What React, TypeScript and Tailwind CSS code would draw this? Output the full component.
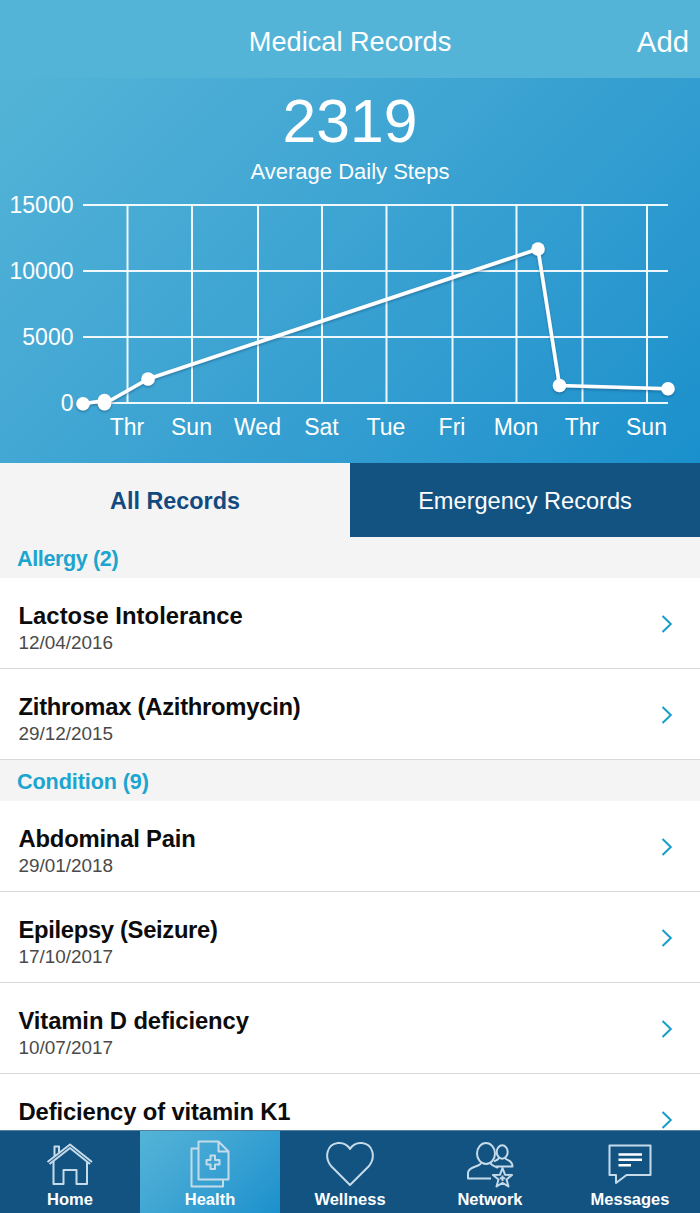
import type { ReactNode } from "react";

interface RecordItem {
  title: string;
  date?: string;
  tracking: string;
}

interface RecordGroup {
  name: string;
  count: number;
  tracking: string;
  items: RecordItem[];
}

const groups: RecordGroup[] = [
  {
    name: "Allergy",
    count: 2,
    tracking: "tracking-[-0.4px]",
    items: [
      { title: "Lactose Intolerance", date: "12/04/2016", tracking: "tracking-[0.04px]" },
      { title: "Zithromax (Azithromycin)", date: "29/12/2015", tracking: "tracking-[-0.26px]" },
    ],
  },
  {
    name: "Condition",
    count: 9,
    tracking: "tracking-[-0.1px]",
    items: [
      { title: "Abdominal Pain", date: "29/01/2018", tracking: "tracking-[-0.2px]" },
      { title: "Epilepsy (Seizure)", date: "17/10/2017", tracking: "tracking-[-0.33px]" },
      { title: "Vitamin D deficiency", date: "10/07/2017", tracking: "tracking-[-0.1px]" },
      { title: "Deficiency of vitamin K1", tracking: "tracking-[-0.13px]" },
    ],
  },
];

const yTicks = [
  { label: "15000", y: 10 },
  { label: "10000", y: 76 },
  { label: "5000", y: 142 },
  { label: "0", y: 208 },
];

const xTicks = [
  { label: "Thr", x: 127.5 },
  { label: "Sun", x: 192 },
  { label: "Wed", x: 258 },
  { label: "Sat", x: 322 },
  { label: "Tue", x: 386.5 },
  { label: "Fri", x: 452.5 },
  { label: "Mon", x: 516.5 },
  { label: "Thr", x: 582.5 },
  { label: "Sun", x: 647 },
];

const points = [
  [83, 208.7],
  [104.5, 205.5],
  [104.5, 208.7],
  [148, 184],
  [538, 54],
  [559.5, 190.5],
  [668, 193.8],
];

const StepsChart = () => (
  <svg width="700" height="268" viewBox="0 0 700 268" className="block overflow-visible">
    <defs>
      <filter id="lineShadow" x="-5%" y="-5%" width="110%" height="115%">
        <feDropShadow dx="0" dy="1.5" stdDeviation="1" floodColor="#0b4a75" floodOpacity="0.5" />
      </filter>
    </defs>
    <g stroke="#fff" strokeWidth="2" strokeOpacity="0.92">
      {yTicks.map((t) => (
        <line key={t.label} x1="83" x2="668" y1={t.y} y2={t.y} />
      ))}
      {xTicks.map((t) => (
        <line key={t.x} x1={t.x} x2={t.x} y1="10" y2="208" />
      ))}
    </g>
    <g fill="#fff" className="text-[23px]">
      {yTicks.map((t) => (
        <text key={t.label} x="73.5" y={t.y + 8} textAnchor="end">
          {t.label}
        </text>
      ))}
      {xTicks.map((t) => (
        <text key={t.x} x={t.x - 0.5} y="240" textAnchor="middle">
          {t.label}
        </text>
      ))}
    </g>
    <g filter="url(#lineShadow)">
      <polyline
        points={points.map((p) => p.join(",")).join(" ")}
        fill="none"
        stroke="#fff"
        strokeWidth="3.6"
        strokeLinejoin="round"
      />
      {points.map(([x, y], i) => (
        <circle key={i} cx={x} cy={y} r="6.8" fill="#fff" />
      ))}
    </g>
  </svg>
);

const RecordRow = ({ title, date, tracking }: RecordItem) => (
  <li className="flex h-[91.25px] items-start justify-between border-b border-[#d9d9dc] pt-[24px] pr-[27.5px] pl-[18.5px]">
    <div>
      <p className={`text-[23.8px] leading-[28px] font-bold text-[#0c0c0c] ${tracking}`}>{title}</p>
      {date && (
        <p className="text-[18.9px] leading-[26px] text-[#4a4a4a]">{date}</p>
      )}
    </div>
    <svg width="12" height="18" viewBox="0 0 12 18" className="mt-[13px]">
      <path d="M1.5 1L9.8 9L1.5 17" fill="none" stroke="#159fca" strokeWidth="2" />
    </svg>
  </li>
);

const NavItem = ({
  label,
  active,
  children,
}: {
  label: string;
  active?: boolean;
  children: ReactNode;
}) => (
  <button
    className={`flex flex-1 flex-col items-center pt-[9px] text-[16.5px] leading-[18px] font-bold text-white ${
      active ? "bg-linear-135 from-[#54b4d7] to-[#1a91cd]" : ""
    }`}
  >
    <svg
      width="50"
      height="50"
      viewBox="0 0 50 50"
      fill="none"
      stroke="#c6dbe9"
      strokeWidth="2"
      strokeLinejoin="round"
    >
      {children}
    </svg>
    {label}
  </button>
);

const App = () => {
  return (
    <div
      className="flex h-[1213px] w-[700px] flex-col overflow-hidden bg-white"
      style={{ fontFamily: '"Liberation Sans", Arial, sans-serif' }}
    >
      <header className="grid h-[78px] shrink-0 grid-cols-[1fr_auto_1fr] items-center bg-[#54b4d7] px-[11px] pt-[5px] text-white">
        <span />
        <h1 className="text-[27.2px] leading-8">Medical Records</h1>
        <button className="justify-self-end text-[29.3px] leading-8">Add</button>
      </header>

      <section className="flex h-[385px] shrink-0 flex-col items-center bg-linear-135 from-[#54b4d7] to-[#1990cc] text-white">
        <p className="mt-[10px] text-[60.6px] leading-[66px]">2319</p>
        <p className="mt-[4px] mb-[9px] text-[22px] leading-[28px]">Average Daily Steps</p>
        <StepsChart />
      </section>

      <div className="flex h-[74px] shrink-0">
        <button className="flex-1 bg-[#f4f4f4] pt-[3px] text-[23.4px] font-bold text-[#124a80]">
          All Records
        </button>
        <button className="flex-1 bg-[#135382] pt-[3px] text-[23.6px] text-white">
          Emergency Records
        </button>
      </div>

      <main className="min-h-0 flex-1 overflow-hidden">
        {groups.map((group) => (
          <section key={group.name}>
            <h2
              className={`flex h-[40.5px] items-center bg-[#f4f4f4] pt-[3px] pl-[17px] text-[21.6px] font-bold text-[#1ba5cf] ${group.tracking}`}
            >
              {group.name} ({group.count})
            </h2>
            <ul>
              {group.items.map((item) => (
                <RecordRow key={item.title} {...item} />
              ))}
            </ul>
          </section>
        ))}
      </main>

      <nav className="flex h-[83px] shrink-0 border-t border-[#56809f] bg-[#135382]">
        <NavItem label="Home">
          <path d="M2.5 22L25 4.5L47 22M9.5 16.5V6.5H14V12.5" />
          <path d="M4.5 24L25 8L45 24" />
          <path d="M8.5 21V44H18.5V30H31.5V44H42V21" />
        </NavItem>
        <NavItem label="Health" active>
          <path d="M13.5 8.5H6.5V46.5H38V39.5" />
          <path d="M13.5 1.5H33.5L43.5 11.5V39.5H13.5ZM33.5 1.5V11.5H43.5" />
          <path d="M25.5 15.5H30V20H34.5V24.5H30V29H25.5V24.5H21.5V20H25.5Z" />
        </NavItem>
        <NavItem label="Wellness">
          <path d="M25 45L6 26C-1 17 2 4 13 3C19 2.5 23 5.5 25 9C27 5.5 31 2.5 37 3C48 4 51 17 44 26Z" />
        </NavItem>
        <NavItem label="Network">
          <ellipse cx="21" cy="13.5" rx="9" ry="10.5" />
          <path d="M16 23C15 27 3 26.5 3 33V38.5H26M25.5 23C26.5 26 31 26.5 33 28" />
          <ellipse cx="37.2" cy="12" rx="5.5" ry="6.7" />
          <path d="M34 18C33 20 30.5 20.5 29 21.5M40 18C42 21 47.5 20 47.5 26.5H31" />
          <path d="M37.5 28L40 34.7L47 35L41.5 39.5L43.5 46.5L37.5 42.8L31.5 46.5L33.5 39.5L28 35L35 34.7Z" />
          <path d="M37.5 35.5V41M34.8 38.2H40.2" />
        </NavItem>
        <NavItem label="Messages">
          <path d="M4.5 5.5H45.5V35H21.5L11 43V35H4.5Z" />
          <path d="M13.5 14.5H37M13.5 19.7H37M13.5 25.2H26" strokeWidth="2.4" stroke="#fff" />
        </NavItem>
      </nav>
    </div>
  );
};

export default App;
